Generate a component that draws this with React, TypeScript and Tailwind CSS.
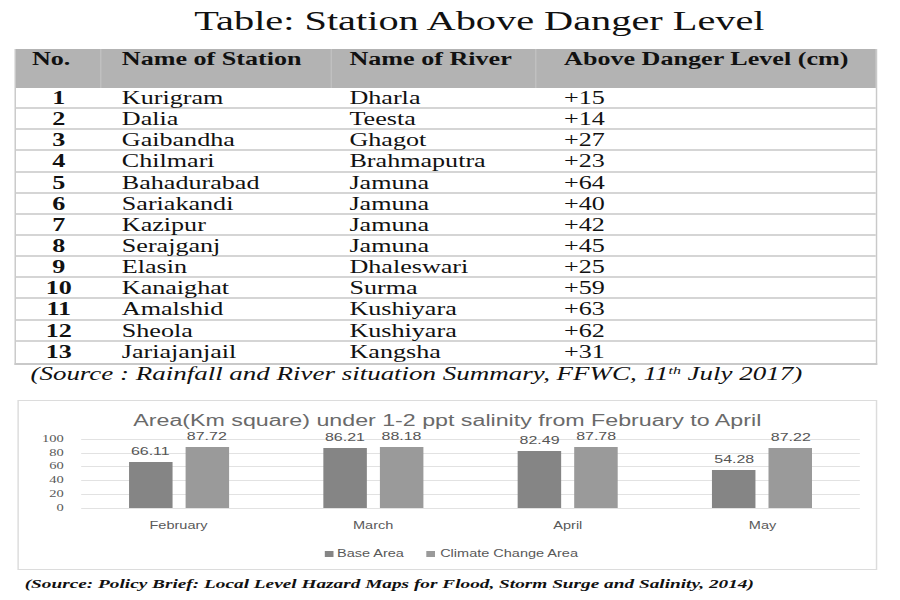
const rows: [number, string, string, string][] = [
  [1, "Kurigram", "Dharla", "+15"],
  [2, "Dalia", "Teesta", "+14"],
  [3, "Gaibandha", "Ghagot", "+27"],
  [4, "Chilmari", "Brahmaputra", "+23"],
  [5, "Bahadurabad", "Jamuna", "+64"],
  [6, "Sariakandi", "Jamuna", "+40"],
  [7, "Kazipur", "Jamuna", "+42"],
  [8, "Serajganj", "Jamuna", "+45"],
  [9, "Elasin", "Dhaleswari", "+25"],
  [10, "Kanaighat", "Surma", "+59"],
  [11, "Amalshid", "Kushiyara", "+63"],
  [12, "Sheola", "Kushiyara", "+62"],
  [13, "Jariajanjail", "Kangsha", "+31"],
];

const salinity = [
  { month: "February", base: 66.11, climate: 87.72 },
  { month: "March", base: 86.21, climate: 88.18 },
  { month: "April", base: 82.49, climate: 87.78 },
  { month: "May", base: 54.28, climate: 87.22 },
];

// px per unit on the y axis (100 -> 69px)
const SCALE = 0.69;

function Bar({ value, color }: { value: number; color: string }) {
  return (
    <div className={`relative w-[30px] ${color}`} style={{ height: value * SCALE }}>
      <span className="absolute bottom-full left-1/2 -translate-x-1/2 mb-[4px] text-[11px] leading-[13px] text-[#555]">
        {value.toFixed(2)}
      </span>
    </div>
  );
}

export default function App() {
  return (
    <div className="w-[900px] h-[600px] overflow-hidden bg-white">
      {/* the source picture is stretched sideways, so the page is drawn narrow and widened */}
      <div className="w-[621px] origin-top-left scale-x-[1.45] font-['Liberation_Serif',serif] text-[#111]">
        <h1 className="pt-[3px] pl-[134px] text-[27.8px] leading-[36px] font-normal">
          Table: Station Above Danger Level
        </h1>

        <div className="mt-[10px] ml-[10px] w-[595px] border-x-[1.5px] border-b-2 border-[#c9c9c9]">
          <div className="flex h-[39px] bg-[#b3b3b3] text-[18px] leading-[21px] font-bold">
            <div className="w-[59px] pl-[11px] border-r border-[#c0c0c0]">No.</div>
            <div className="w-[159px] pl-[14px] border-r border-[#c0c0c0]">Name of Station</div>
            <div className="w-[141px] pl-[12px] border-r border-[#c0c0c0]">Name of River</div>
            <div className="flex-1 pl-[19px]">Above Danger Level (cm)</div>
          </div>
          {rows.map(([no, station, river, level]) => (
            <div
              key={no}
              className="flex h-[21.15px] border-b-2 border-[#d5d5d5] last:border-b-0 text-[18px] leading-[21px]"
            >
              <div className="w-[59px] text-center font-bold">{no}</div>
              <div className="w-[159px] pl-[14px]">{station}</div>
              <div className="w-[141px] pl-[12px]">{river}</div>
              <div className="flex-1 pl-[19px]">{level}</div>
            </div>
          ))}
        </div>

        <p className="-mt-[1px] pl-[21px] text-[18.6px] leading-[20px] italic">
          (Source : Rainfall and River situation Summary, FFWC, 11
          <sup className="text-[11px]">th</sup> July 2017)
        </p>

        <div className="mt-[16px] ml-[12px] w-[593px] h-[170px] border border-[#dcdcdc] font-['Liberation_Sans',Arial,sans-serif] text-[#595959]">
          <div className="pt-[10px] text-center text-[16px] leading-[20px] text-[#6a6a6a]">
            Area(Km square) under 1-2 ppt salinity from February to April
          </div>

          <div className="mt-[8px] flex items-start">
            <div className="-mt-[5px] w-[31px] h-[79px] flex flex-col justify-between text-right font-['Liberation_Serif',serif] text-[10px] leading-[10px]">
              {[100, 80, 60, 40, 20, 0].map((v) => (
                <span key={v}>{v}</span>
              ))}
            </div>
            <div className="relative ml-[12px] w-[537px] h-[70px]">
              <div className="absolute inset-0 flex flex-col justify-between">
                {[0, 1, 2, 3, 4, 5].map((i) => (
                  <div key={i} className="h-px bg-[#e2e2e2]" />
                ))}
              </div>
              <div className="absolute inset-x-0 bottom-[1px] flex">
                {salinity.map((s) => (
                  <div key={s.month} className="flex-1 flex items-end justify-center gap-[9px]">
                    <Bar value={s.base} color="bg-[#858585]" />
                    <Bar value={s.climate} color="bg-[#9a9a9a]" />
                  </div>
                ))}
              </div>
            </div>
          </div>

          <div className="mt-[6px] ml-[43px] w-[537px] grid grid-cols-4 text-center text-[10px] leading-[14px]">
            {salinity.map((s) => (
              <span key={s.month}>{s.month}</span>
            ))}
          </div>

          <div className="mt-[14px] pl-[6px] flex justify-center gap-[15px] text-[10px] leading-[14px]">
            <span className="flex items-center gap-[2px]">
              <span className="w-[6px] h-[6px] bg-[#858585]" />
              Base Area
            </span>
            <span className="flex items-center gap-[4px]">
              <span className="w-[6px] h-[6px] bg-[#9a9a9a]" />
              Climate Change Area
            </span>
          </div>
        </div>

        <p className="mt-[6px] pl-[17px] text-[13.3px] leading-[16px] font-bold italic">
          (Source: Policy Brief: Local Level Hazard Maps for Flood, Storm Surge and Salinity, 2014)
        </p>
      </div>
    </div>
  );
}
